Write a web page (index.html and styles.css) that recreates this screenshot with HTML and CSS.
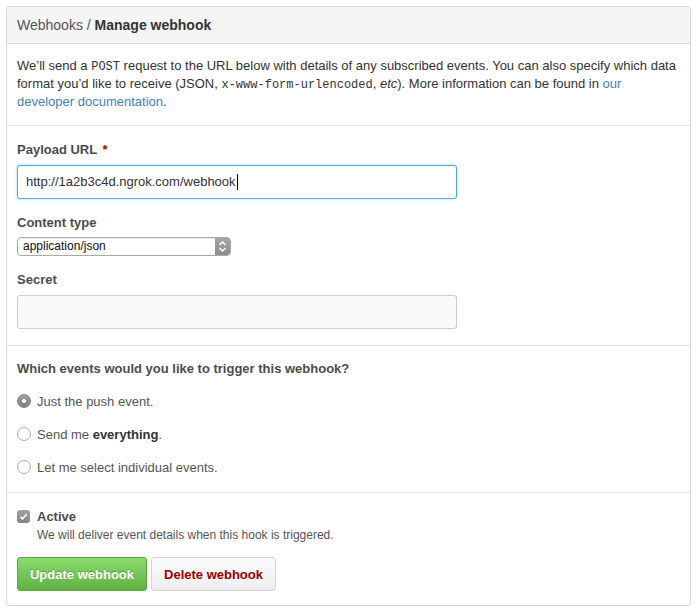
FILE: index.html
```html
<!DOCTYPE html>
<html>
<head>
<meta charset="utf-8">
<title>Manage webhook</title>
<link rel="stylesheet" href="styles.css">
</head>
<body>
<div class="box">
  <div class="box-header">
    <span class="crumb">Webhooks /</span> <strong>Manage webhook</strong>
  </div>
  <div class="section intro-section">
    <p class="intro">We’ll send a <code>POST</code> request to the URL below with details of any subscribed events. You can also specify which data format you’d like to receive (JSON, <code>x-www-form-urlencoded</code>, <em>etc</em>). More information can be found in <a href="#">our developer documentation</a>.</p>
  </div>
  <div class="section form">
    <div class="group">
      <label class="label">Payload URL <span class="req">*</span></label>
      <div class="input focused"><span>http://1a2b3c4d.ngrok.com/webhook</span><span class="caret"></span></div>
    </div>
    <div class="group ct">
      <label class="label">Content type</label>
      <div class="select">
        <span class="select-text">application/json</span>
        <span class="select-arrows">
          <svg width="15" height="17" viewBox="0 0 15 17"><path d="M4.5 7 L7.5 4 L10.5 7" fill="none" stroke="#fff" stroke-width="1.4"/><path d="M4.5 10 L7.5 13 L10.5 10" fill="none" stroke="#fff" stroke-width="1.4"/></svg>
        </span>
      </div>
    </div>
    <div class="group last">
      <label class="label">Secret</label>
      <div class="input secret"></div>
    </div>
  </div>
  <div class="section events">
    <p class="label q">Which events would you like to trigger this webhook?</p>
    <label class="radio"><input type="radio" name="ev" checked>Just the push event.</label>
    <label class="radio"><input type="radio" name="ev">Send me <strong>everything</strong>.</label>
    <label class="radio"><input type="radio" name="ev">Let me select individual events.</label>
  </div>
  <div class="section final">
    <div class="active">
      <span class="check"><svg width="13" height="13" viewBox="0 0 13 13"><path d="M3.5 6.8 L5.6 8.8 L9.6 4.2" fill="none" stroke="#fff" stroke-width="1.6"/></svg></span>
      <div>
        <div class="label">Active</div>
        <div class="note">We will deliver event details when this hook is triggered.</div>
      </div>
    </div>
    <div class="buttons">
      <button class="btn primary">Update webhook</button>
      <button class="btn danger">Delete webhook</button>
    </div>
  </div>
</div>
</body>
</html>
```

FILE: styles.css
```css
* { box-sizing: border-box; }
html, body { background: #fff; }
body {
  margin: 0;
  padding: 6px 7px 6px 6px;
  font-family: "Liberation Sans", Arial, Helvetica, sans-serif;
  font-size: 13px;
  line-height: 18px;
  color: #333;
}
.box {
  border: 1px solid #d8d8d8;
  border-radius: 3px;
  background: #fff;
}
.box-header {
  height: 37px;
  line-height: 36px;
  padding: 0 10px;
  background: #f5f5f5;
  border-bottom: 1px solid #d8d8d8;
  border-radius: 3px 3px 0 0;
  font-size: 14px;
  color: #333;
}
.crumb { color: #555; }
.section {
  padding: 13px 10px 14px;
  border-bottom: 1px solid #e0e0e0;
}
.section:last-child { border-bottom: 0; }
.intro-section { padding-top: 13px; padding-bottom: 14px; }
.intro { margin: 0; }
code {
  font-family: "Liberation Mono", "DejaVu Sans Mono", monospace;
  font-size: 12px;
  line-height: 1;
}
a { color: #4183c4; text-decoration: none; }
.label {
  display: block;
  font-weight: bold;
  color: #4c4c4c;
  margin: 0;
}
.req { color: #a00; margin-left: 2px; }
.form { padding-top: 15px; padding-bottom: 16px; }
.group { margin-bottom: 15px; }
.group.last { margin-bottom: 0; }
.group .label { margin-bottom: 6px; }
.group.ct .label { margin-bottom: 5px; }
.input {
  display: flex;
  align-items: center;
  width: 440px;
  height: 34px;
  padding: 0 8px;
  border: 1px solid #ccc;
  border-radius: 3px;
  background: #fff;
  font-size: 13px;
  color: #333;
}
.input.focused {
  border-color: #51a7e8;
  box-shadow: 0 0 3px rgba(81,167,232,0.5);
}
.caret {
  display: inline-block;
  width: 1px;
  height: 16px;
  background: #000;
  margin-left: 1px;
}
.input.secret {
  background: #fafafa;
  margin-top: 1px;
}
.select {
  display: flex;
  width: 214px;
  height: 19px;
  border: 1px solid #a9a9a9;
  border-radius: 4px;
  overflow: hidden;
  background: #fff;
  box-shadow: inset 0 1px 1px rgba(0,0,0,0.08);
}
.select-text {
  flex: 1;
  padding-left: 5px;
  font-size: 12px;
  line-height: 17px;
  color: #111;
}
.select-arrows {
  width: 15px;
  display: flex;
  align-items: center;
  justify-content: center;
  background: linear-gradient(#a6a6a6, #8d8d8d);
}
.events { padding-top: 14px; padding-bottom: 15px; }
.q { margin-bottom: 15px; }
.radio {
  display: block;
  color: #555;
  margin-bottom: 15px;
}
.radio:last-child { margin-bottom: 0; }
.radio strong { color: #333; }
.radio input {
  appearance: none;
  -webkit-appearance: none;
  display: inline-block;
  vertical-align: -2px;
  width: 14px;
  height: 14px;
  margin: 0 6px 0 0;
  border: 1px solid #aaa;
  border-radius: 50%;
  background: #fff;
}
.radio input:checked {
  border-color: #8a8a8a;
  background: radial-gradient(circle, #fff 0 1.6px, transparent 2.2px), linear-gradient(#a0a0a0, #7e7e7e);
}
.final { padding-top: 15px; padding-bottom: 14px; }
.active {
  display: flex;
  gap: 7px;
  align-items: flex-start;
}
.check {
  display: block;
  width: 13px;
  height: 13px;
  margin-top: 2px;
  border-radius: 3px;
  background: linear-gradient(#a3a3a3, #868686);
}
.check svg { display: block; }
.note { color: #555; font-size: 12px; }
.buttons {
  display: flex;
  gap: 4px;
  margin-top: 13px;
}
.btn {
  height: 34px;
  padding: 0;
  white-space: nowrap;
  border-radius: 3px;
  font-family: "Liberation Sans", Arial, sans-serif;
  font-size: 13px;
  font-weight: bold;
  cursor: pointer;
}
.btn.primary {
  width: 130px;
  color: #fff;
  text-shadow: 0 -1px 0 rgba(0,0,0,0.25);
  background: linear-gradient(#8add6d, #60b044);
  border: 1px solid #5ca941;
}
.btn.danger {
  width: 125px;
  color: #900;
  background: linear-gradient(#fcfcfc, #eee);
  border: 1px solid #d5d5d5;
}
```
